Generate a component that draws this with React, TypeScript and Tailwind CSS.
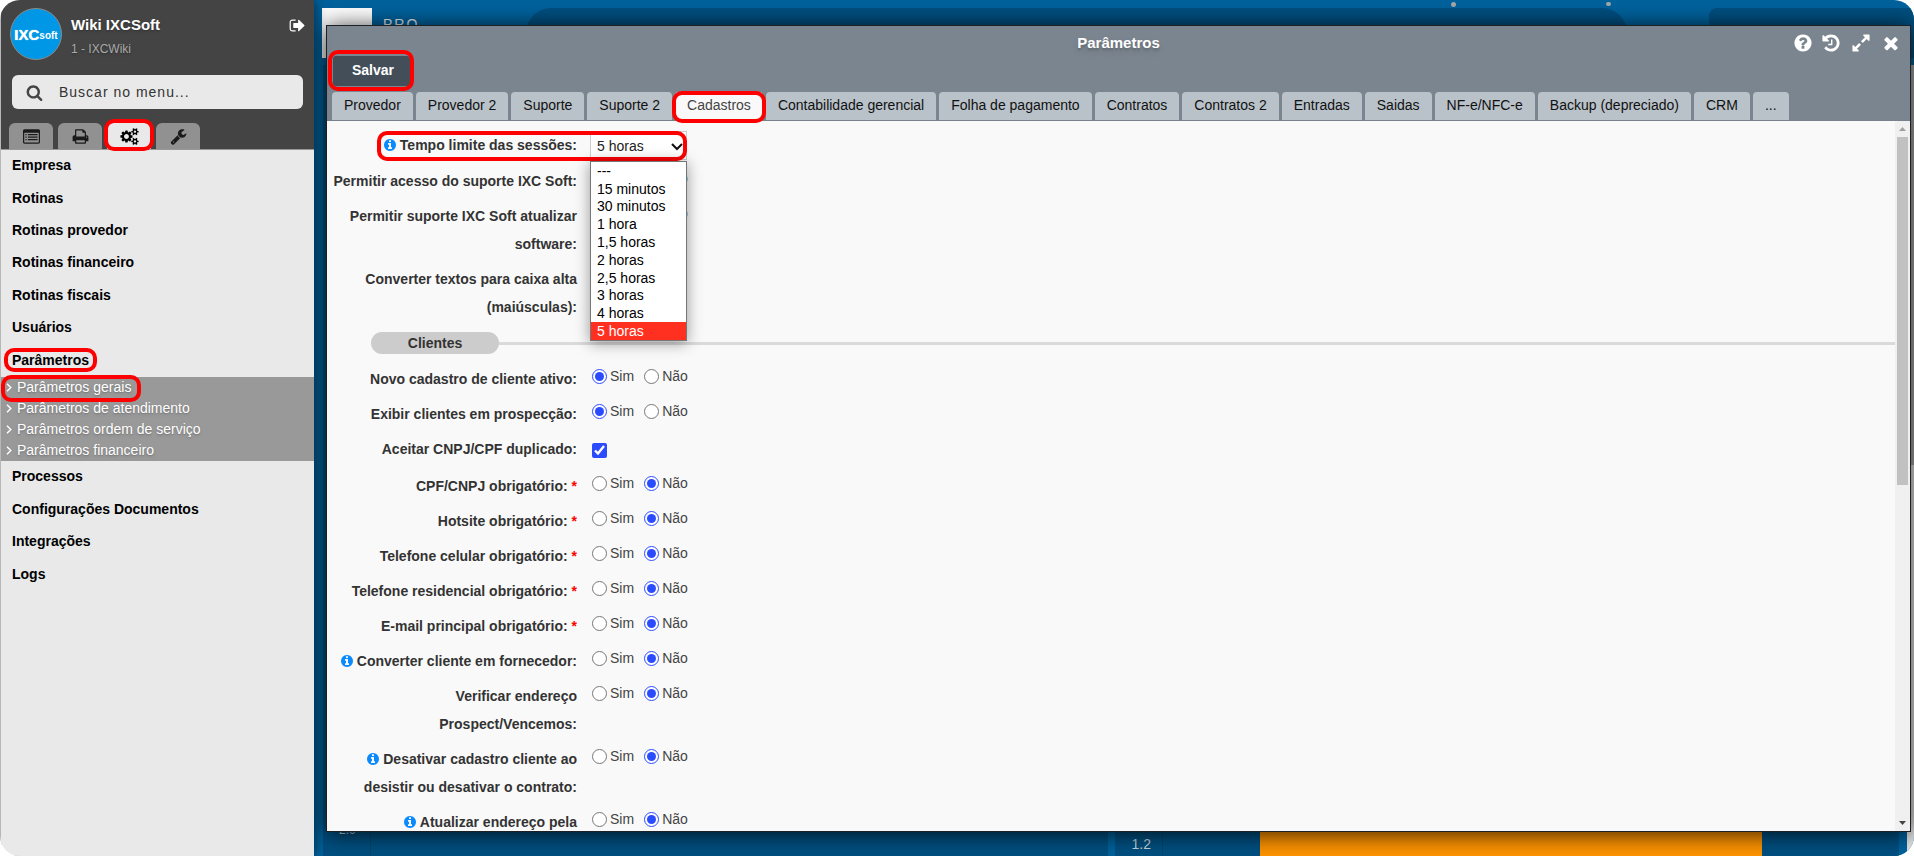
import { useState } from 'react'
import type { ReactNode } from 'react'
import { clsx } from 'clsx'

const icons = {
  search:
    'M1216 832q0-185-131.5-316.5t-316.5-131.5-316.5 131.5-131.5 316.5 131.5 316.5 316.5 131.5 316.5-131.5 131.5-316.5zm512 832q0 52-38 90t-90 38q-54 0-90-38l-343-342q-179 124-399 124-143 0-273.5-55.5t-225-150-150-225-55.5-273.5 55.5-273.5 150-225 225-150 273.5-55.5 273.5 55.5 225 150 150 225 55.5 273.5q0 220-124 399l343 343q37 37 37 90z',
  signOut:
    'M704 1440q0 4 1 20t.5 26.5-3 23.5-10 19.5-20.5 6.5h-320q-119 0-203.5-84.5t-84.5-203.5v-704q0-119 84.5-203.5t203.5-84.5h320q13 0 22.5 9.5t9.5 22.5q0 4 1 20t.5 26.5-3 23.5-10 19.5-20.5 6.5h-320q-66 0-113 47t-47 113v704q0 66 47 113t113 47h312l11.5 1 11.5 3 8 5.5 7 9 2 13.5zm928-544q0 26-19 45l-544 544q-19 19-45 19t-45-19-19-45v-288h-448q-26 0-45-19t-19-45v-384q0-26 19-45t45-19h448v-288q0-26 19-45t45-19 45 19l544 544q19 19 19 45z',
  list:
    'M160 128h1472q66 0 113 47t47 113v1216q0 66-47 113t-113 47h-1472q-66 0-113-47t-47-113v-1216q0-66 47-113t113-47zm0 384q-32 0-32 32v960q0 32 32 32h1472q32 0 32-32v-960q0-32-32-32zM256 640h128v128h-128zM512 640h1024v128h-1024zM256 896h128v128h-128zM512 896h1024v128h-1024zM256 1152h128v128h-128zM512 1152h1024v128h-1024z',
  print:
    'M448 1536h896v-256h-896v256zm0-640h896v-384h-160q-40 0-68-28t-28-68v-160h-640v640zm1152 64q0-26-19-45t-45-19-45 19-19 45 19 45 45 19 45-19 19-45zm128 0v416q0 13-9.5 22.5t-22.5 9.5h-224v160q0 40-28 68t-68 28h-960q-40 0-68-28t-28-68v-160h-224q-13 0-22.5-9.5t-9.500-22.5v-416q0-79 56.5-135.5t135.5-56.5h64v-544q0-40 28-68t68-28h672q40 0 88 20t76 48l152 152q28 28 48 76t20 88v256h64q79 0 135.5 56.5t56.5 135.5z',
  cogs:
    'M896 896q0-106-75-181t-181-75-181 75-75 181 75 181 181 75 181-75 75-181zm768 512q0-52-38-90t-90-38-90 38-38 90q0 53 37.5 90.5t90.5 37.5 90.5-37.5 37.5-90.5zm0-1024q0-52-38-90t-90-38-90 38-38 90q0 53 37.5 90.5t90.5 37.5 90.5-37.5 37.5-90.5zm-384 421v185q0 10-7 19.5t-16 10.5l-155 24q-11 35-32 76 34 48 90 115 7 11 7 20 0 12-7 19-23 30-82.5 89.5t-78.5 59.5q-11 0-21-7l-115-90q-37 19-77 31-11 108-23 155-7 24-30 24h-186q-11 0-20-7.5t-10-17.5l-23-153q-34-10-75-31l-118 89q-7 7-20 7-11 0-21-8-144-133-144-160 0-9 7-19 10-14 41-53t47-61q-23-44-35-82l-152-24q-10-1-17-9.5t-7-19.5v-185q0-10 7-19.5t16-10.5l155-24q11-35 32-76-34-48-90-115-7-11-7-20 0-12 7-20 22-30 82-89t79-59q11 0 21 7l115 90q34-18 77-32 11-108 23-154 7-24 30-24h186q11 0 20 7.5t10 17.5l23 153q34 10 75 31l118-89q8-7 20-7 11 0 21 8 144 133 144 160 0 8-7 19-12 16-42 54t-45 60q23 48 34 82l152 23q10 2 17 10.5t7 19.5zm640 533v140q0 16-149 31-12 27-30 52 51 113 51 138 0 4-4 7-122 71-124 71-8 0-46-47t-52-68q-20 2-30 2t-30-2q-14 21-52 68t-46 47q-2 0-124-71-4-3-4-7 0-25 51-138-18-25-30-52-149-15-149-31v-140q0-16 149-31 13-29 30-52-51-113-51-138 0-4 4-7 4-2 35-20t59-34 30-16q8 0 46 46.5t52 67.5q20-2 30-2t30 2q51-71 92-112l6-2q4 0 124 70 4 3 4 7 0 25-51 138 17 23 30 52 149 15 149 31zm0-1024v140q0 16-149 31-12 27-30 52 51 113 51 138 0 4-4 7-122 71-124 71-8 0-46-47t-52-68q-20 2-30 2t-30-2q-14 21-52 68t-46 47q-2 0-124-71-4-3-4-7 0-25 51-138-18-25-30-52-149-15-149-31v-140q0-16 149-31 13-29 30-52-51-113-51-138 0-4 4-7 4-2 35-20t59-34 30-16q8 0 46 46.5t52 67.5q20-2 30-2t30 2q51-71 92-112l6-2q4 0 124 70 4 3 4 7 0 25-51 138 17 23 30 52 149 15 149 31z',
  wrench:
    'M448 1472q0-26-19-45t-45-19-45 19-19 45 19 45 45 19 45-19 19-45zm644-420l-682 682q-37 37-90 37-52 0-91-37l-106-108q-38-36-38-90 0-53 38-91l681-681q39 98 114.5 173.5t173.5 114.5zm634-435q0 39-23 106-47 134-164.5 217.5t-258.5 83.5q-185 0-316.5-131.5t-131.5-316.5 131.5-316.5 316.5-131.5q58 0 121.5 16.5t107.5 46.5q16 11 16 28t-16 28l-293 169v224l193 107q5-3 79-48.5t135.5-81 70.5-35.5q15 0 23.5 10t8.5 25z',
  question:
    'M1024 1376v-192q0-14-9-23t-23-9h-192q-14 0-23 9t-9 23v192q0 14 9 23t23 9h192q14 0 23-9t9-23zm256-672q0-88-55.5-163t-138.5-116-170-41q-243 0-371 213-15 24 8 42l132 100q7 6 19 6 16 0 25-12 53-68 86-92 34-24 86-24 48 0 85.5 26t37.5 59q0 38-20 61t-68 45q-63 28-115.5 86.5t-52.5 125.5v36q0 14 9 23t23 9h192q14 0 23-9t9-23q0-19 21.5-49.5t54.5-49.5q32-18 49-28.5t46-35 44.5-48 28-60.5 12.5-81zm384 192q0 209-103 385.5t-279.5 279.5-385.5 103-385.5-103-279.5-279.5-103-385.5 103-385.5 279.5-279.5 385.5-103 385.5 103 279.5 279.5 103 385.5z',
  info:
    'M1152 1376v-160q0-14-9-23t-23-9h-96v-512q0-14-9-23t-23-9h-320q-14 0-23 9t-9 23v160q0 14 9 23t23 9h96v320h-96q-14 0-23 9t-9 23v160q0 14 9 23t23 9h448q14 0 23-9t9-23zm-128-896v-160q0-14-9-23t-23-9h-192q-14 0-23 9t-9 23v160q0 14 9 23t23 9h192q14 0 23-9t9-23zm640 416q0 209-103 385.5t-279.5 279.5-385.5 103-385.5-103-279.5-279.5-103-385.5 103-385.5 279.5-279.5 385.5-103 385.5 103 279.5 279.5 103 385.5z',
  history:
    'M1664 896q0 156-61 298t-164 245-245 164-298 61q-172 0-327-72.5t-264-204.5q-7-10-6.5-22.5t8.5-20.5l137-138q10-9 25-9 16 2 23 12 73 95 179 147t225 52q104 0 198.5-40.5t163.5-109.5 109.5-163.5 40.5-198.5-40.5-198.5-109.5-163.5-163.5-109.5-198.5-40.5q-98 0-188 35.5t-160 101.5l137 138q31 30 14 69-17 40-59 40h-448q-26 0-45-19t-19-45v-448q0-42 40-59 39-17 69 14l130 129q107-101 244.5-156.5t284.5-55.5q156 0 298 61t245 164 164 245 61 298zm-640-288v448q0 14-9 23t-23 9h-320q-14 0-23-9t-9-23v-64q0-14 9-23t23-9h224v-352q0-14 9-23t23-9h64q14 0 23 9t9 23z',
  expand:
    'M883 1056q0 13-10 23l-332 332 144 144q19 19 19 45t-19 45-45 19h-448q-26 0-45-19t-19-45v-448q0-26 19-45t45-19 45 19l144 144 332-332q10-10 23-10t23 10l114 114q10 10 10 23zm781-864v448q0 26-19 45t-45 19-45-19l-144-144-332 332q-10 10-23 10t-23-10l-114-114q-10-10-10-23t10-23l332-332-144-144q-19-19-19-45t19-45 45-19h448q26 0 45 19t19 45z',
  close:
    'M1490 1322q0 40-28 68l-136 136q-28 28-68 28t-68-28l-294-294-294 294q-28 28-68 28t-68-28l-136-136q-28-28-28-68t28-68l294-294-294-294q-28-28-28-68t28-68l136-136q28-28 68-28t68 28l294 294 294-294q28-28 68-28t68 28l136 136q28 28 28 68t-28 68l-294 294 294 294q28 28 28 68z',
}

type IconName = keyof typeof icons

function Icon({ name, className }: { name: IconName; className?: string }) {
  const wide = name === 'cogs'
  return (
    <svg viewBox={wide ? '0 0 1920 1792' : '0 0 1792 1792'} fill="currentColor" fillRule={name === 'list' ? 'evenodd' : 'nonzero'} className={clsx('shrink-0', className)} aria-hidden="true">
      <path d={icons[name]} />
    </svg>
  )
}

// Red highlight drawn over the element it sits in
function Mark({ className }: { className: string }) {
  return <span className={clsx('pointer-events-none absolute z-10 rounded-[10px] border-4 border-[#fe0000]', className)} />
}

const menuTop = ['Empresa', 'Rotinas', 'Rotinas provedor', 'Rotinas financeiro', 'Rotinas fiscais', 'Usuários', 'Parâmetros']
const menuBottom = ['Processos', 'Configurações Documentos', 'Integrações', 'Logs']
const submenu = ['Parâmetros gerais', 'Parâmetros de atendimento', 'Parâmetros ordem de serviço', 'Parâmetros financeiro']

const sideTabs: { icon: IconName; label: string }[] = [
  { icon: 'list', label: 'Cadastros' },
  { icon: 'print', label: 'Relatórios' },
  { icon: 'cogs', label: 'Configurações' },
  { icon: 'wrench', label: 'Ferramentas' },
]

const tabs = [
  'Provedor', 'Provedor 2', 'Suporte', 'Suporte 2', 'Cadastros', 'Contabilidade gerencial', 'Folha de pagamento',
  'Contratos', 'Contratos 2', 'Entradas', 'Saidas', 'NF-e/NFC-e', 'Backup (depreciado)', 'CRM', '...',
]

const sessionTimes = ['---', '15 minutos', '30 minutos', '1 hora', '1,5 horas', '2 horas', '2,5 horas', '3 horas', '4 horas', '5 horas']

const clientFields = [
  { id: 'ativo', label: 'Novo cadastro de cliente ativo:', value: 'sim' },
  { id: 'prospeccao', label: 'Exibir clientes em prospecção:', value: 'sim' },
  { id: 'duplicado', label: 'Aceitar CNPJ/CPF duplicado:', value: 'check' },
  { id: 'cpf', label: 'CPF/CNPJ obrigatório:', value: 'nao', required: true },
  { id: 'hotsite', label: 'Hotsite obrigatório:', value: 'nao', required: true },
  { id: 'celular', label: 'Telefone celular obrigatório:', value: 'nao', required: true },
  { id: 'residencial', label: 'Telefone residencial obrigatório:', value: 'nao', required: true },
  { id: 'email', label: 'E-mail principal obrigatório:', value: 'nao', required: true },
  { id: 'fornecedor', label: 'Converter cliente em fornecedor:', value: 'nao', info: true },
  { id: 'endereco', label: 'Verificar endereço Prospect/Vencemos:', value: 'nao' },
  { id: 'desativar', label: 'Desativar cadastro cliente ao desistir ou desativar o contrato:', value: 'nao', info: true },
  { id: 'atualizar', label: 'Atualizar endereço pela', value: 'nao', info: true },
]

function LabelText({ children, info, required }: { children: ReactNode; info?: boolean; required?: boolean }) {
  return (
    <>
      {info && <Icon name="info" className="mr-[3px] inline-block h-[14px] w-[14px] align-[-2px] text-[#0a8aff]" />}
      {children}
      {required && <span className="text-[#f00]"> *</span>}
    </>
  )
}

const rowClass = 'grid grid-cols-[248px_1fr] gap-x-[13px] pb-[7px] pl-[2px]'
const labelClass = 'text-right font-bold leading-7 text-[#333]'

function RadioRow({ id, label, value, info, required }: { id: string; label: string; value: string; info?: boolean; required?: boolean }) {
  return (
    <div role="radiogroup" aria-labelledby={`${id}-label`} className={rowClass}>
      <div id={`${id}-label`} className={labelClass}>
        <LabelText info={info} required={required}>{label}</LabelText>
      </div>
      <div className="flex h-[22px] items-center gap-[10px] pl-[2px] text-[#444]">
        <label className="flex items-center gap-[3px]">
          <input type="radio" name={id} defaultChecked={value === 'sim'} className="h-[15px] w-[15px] accent-[#2b4bff]" />
          Sim
        </label>
        <label className="flex items-center gap-[3px]">
          <input type="radio" name={id} defaultChecked={value === 'nao'} className="h-[15px] w-[15px] accent-[#2b4bff]" />
          Não
        </label>
      </div>
    </div>
  )
}

function CheckRow({ id, label, checked }: { id: string; label: string; checked?: boolean }) {
  return (
    <div className={rowClass}>
      <label htmlFor={id} className={labelClass}>{label}</label>
      <div className="flex h-[30px] items-center pl-[2px]">
        <input id={id} type="checkbox" defaultChecked={checked} className="h-[15px] w-[15px] accent-[#2b4bff]" />
      </div>
    </div>
  )
}

function Sidebar() {
  return (
    <aside className="z-20 flex w-[313px] shrink-0 flex-col bg-[#e9e9e9] shadow-[0_0_12px_rgba(0,0,0,0.6)]">
      <div className="border-b border-[#999] bg-[#444] px-2">
        <div className="flex h-[75px] pt-2 pl-px">
          <div className="flex h-[52px] w-[52px] items-center justify-center rounded-full border border-[#8a8a8a] bg-[#0098e6] font-bold leading-none text-white">
            <span className="text-[15px] text-shadow-[0_0_1px_#fff]">IXC</span>
            <span className="pt-1 text-[10px]">soft</span>
          </div>
          <div className="pl-[9px] pt-[7px] text-shadow-md">
            <div className="text-[15px] font-bold leading-5 text-white">Wiki IXCSoft</div>
            <div className="pt-1 text-[12px] leading-5 text-[#aaa]">1 - IXCWiki</div>
          </div>
          <button type="button" aria-label="Sair" className="ml-auto h-[34px] text-white">
            <Icon name="signOut" className="h-[17px] w-[17px]" />
          </button>
        </div>
        <label className="mx-[3px] flex h-[34px] items-center gap-4 rounded-[6px] bg-[#e9e9e9] pl-[14px] text-[#444]">
          <Icon name="search" className="h-[17px] w-[17px]" />
          <input type="text" aria-label="Buscar no menu" placeholder="Buscar no menu..." className="w-full bg-transparent pb-px text-[14px] tracking-[1px] outline-none placeholder:text-[#333]" />
        </label>
        <div className="mt-[14px] flex gap-[5px]">
          {sideTabs.map((tab) => {
            const active = tab.icon === 'cogs'
            return (
              <button
                key={tab.icon}
                type="button"
                aria-label={tab.label}
                className={clsx('relative flex h-[26px] w-[44px] items-center justify-center rounded-t-[6px]', active ? 'bg-[#e9e9e9] text-black' : 'bg-[#919191] text-[#1a1a1a]')}
              >
                <Icon name={tab.icon} className={clsx('h-[17px]', active ? 'w-[19px]' : 'w-[17px]')} />
                {active && <Mark className="-inset-x-[3px] -top-1 -bottom-[2px]" />}
              </button>
            )
          })}
        </div>
      </div>

      <nav className="text-[14px] text-black">
        <ul className="grid h-[227px] auto-rows-fr font-bold">
          {menuTop.map((item) => (
            <li key={item} className="flex items-center pb-[2px] pl-[11px]">
              <a href="#" className="relative">
                {item}
                {item === 'Parâmetros' && <Mark className="-inset-x-2 -inset-y-[2px]" />}
              </a>
            </li>
          ))}
        </ul>
        <ul className="bg-[#999] text-white text-shadow-md">
          {submenu.map((item, i) => (
            <li key={item} className="flex h-[21px] items-center">
              <a href="#" className="relative flex h-[21px] items-center gap-[5px] pl-[5px] pb-px">
                <svg viewBox="0 0 6 9" className="h-[9px] w-[6px]" fill="none" stroke="currentColor" strokeWidth="1.4" aria-hidden="true">
                  <path d="M1 .7 4.8 4.5 1 8.3" />
                </svg>
                {item}
                {i === 0 && <Mark className="left-0 -right-[10px] -top-[2px] -bottom-1" />}
              </a>
            </li>
          ))}
        </ul>
        <ul className="grid h-[130px] auto-rows-fr font-bold">
          {menuBottom.map((item) => (
            <li key={item} className="flex items-center pb-[2px] pl-[11px]">
              <a href="#">{item}</a>
            </li>
          ))}
        </ul>
      </nav>
    </aside>
  )
}

// Dashboard that shows behind the window
function Dashboard() {
  return (
    <div className="flex h-full flex-col bg-[#00629d] text-white">
      <div className="relative flex h-[65px] items-start pl-2 pt-2">
        <div className="h-[50px] w-[50px] bg-white" />
        <div className="w-[154px] pl-[11px] text-[14px] leading-8 tracking-[2px] text-[#e6ecf0]">PRO —</div>
        <div className="h-[50px] flex-1 rounded-full bg-[#004f80]" />
        <div className="ml-[82px] h-[50px] w-[205px] rounded-l-lg bg-[#004f80]" />
        <span className="absolute right-[458px] top-[2px] h-[5px] w-[5px] rounded-full bg-[#a5a5a5]" />
        <span className="absolute right-[303px] top-[2px] h-[4px] w-[5px] rounded-full bg-[#a5a5a5]" />
      </div>
      <div className="flex flex-1">
        <div className="flex flex-1 gap-[7px] pl-[9px] pr-2">
          <div className="flex flex-1 bg-[#005082]">
            <div className="flex w-[48px] items-end border-r border-[#00476f] pb-[18px] pl-4 text-[12px] leading-4 text-[#c8d4dc]">2.0</div>
          </div>
          <div className="flex flex-1 bg-[#005082]">
            <div className="flex w-[48px] items-end border-r border-[#00476f] pb-1 pl-[17px] text-[14px] leading-4 text-[#c8d4dc]">1.2</div>
            <div className="ml-[97px] mr-[137px] flex-1 bg-[#ff9400]" />
          </div>
        </div>
        <div className="w-[7px] bg-[#e4e4e4]">
          <div className="h-[400px] bg-[#a8a8a8]" />
        </div>
      </div>
    </div>
  )
}

export default function App() {
  const [time, setTime] = useState('5 horas')

  return (
    <div className="flex h-screen overflow-hidden rounded-[20px] bg-white pl-px font-['Liberation_Sans',Arial,sans-serif] text-[14px] leading-5">
      <Sidebar />
      <main className="relative min-w-0 flex-1">
        <Dashboard />

        <section className="absolute top-[25px] right-[3px] bottom-6 left-3 flex flex-col border border-[#1c2126] bg-[#f9f9f9] shadow-[0_2px_22px_rgba(0,0,0,0.8)]">
          <header className="border-b border-[#77818c] bg-[#7b858f]">
            <div className="grid h-[30px] grid-cols-[1fr_auto_1fr] items-center px-[9px] pt-1">
              <h1 className="col-start-2 text-[15px] font-bold text-white text-shadow-lg">Parâmetros</h1>
              <div className="flex justify-end gap-2 text-white">
                <button type="button" aria-label="Ajuda"><Icon name="question" className="h-5 w-5" /></button>
                <button type="button" aria-label="Histórico"><Icon name="history" className="h-5 w-5" /></button>
                <button type="button" aria-label="Maximizar" className="pl-[2px]"><Icon name="expand" className="h-5 w-5" /></button>
                <button type="button" aria-label="Fechar" className="pl-[2px]"><Icon name="close" className="h-5 w-5" /></button>
              </div>
            </div>
            <div className="flex pl-[6px]">
              <button type="button" className="relative h-[30px] w-[77px] rounded-[3px] bg-[#434e59] pb-[2px] pl-[3px] font-bold text-white">
                Salvar
                <Mark className="-left-[5px] -right-1 -top-[6px] -bottom-[5px]" />
              </button>
            </div>
            <div role="tablist" className="mt-[6px] flex gap-[3px] pl-[5px]">
              {tabs.map((tab) => {
                const active = tab === 'Cadastros'
                return (
                  <button
                    key={tab}
                    type="button"
                    role="tab"
                    aria-selected={active}
                    className={clsx('relative h-7 rounded-t-[4px] px-3 pb-[2px]', active ? 'bg-[#f9f9f9] text-[#444]' : 'bg-[#b9c2c9] text-[#111]')}
                  >
                    {tab}
                    {active && <Mark className="-inset-x-[3px] -top-px -bottom-[3px]" />}
                  </button>
                )
              })}
            </div>
          </header>

          <div className="flex min-h-0 flex-1">
            <form className="min-w-0 flex-1 overflow-hidden pt-[10px]">
              <div className={rowClass}>
                <label htmlFor="tempo" className={labelClass}>
                  <LabelText info>Tempo limite das sessões:</LabelText>
                </label>
                <div className="relative h-[29px] w-[97px]">
                  <select
                    id="tempo"
                    value={time}
                    onChange={(e) => setTime(e.target.value)}
                    className="h-[29px] w-full appearance-none border border-[#ccc] bg-white pl-[6px] text-[14px] text-[#222]"
                  >
                    {sessionTimes.map((t) => (
                      <option key={t}>{t}</option>
                    ))}
                  </select>
                  <svg viewBox="0 0 12 8" className="pointer-events-none absolute right-1 top-3 h-2 w-3" fill="none" stroke="#111" strokeWidth="2" aria-hidden="true">
                    <path d="M1 1l5 5 5-5" />
                  </svg>
                  <Mark className="-left-[213px] right-0 top-0 -bottom-px" />
                  {/* Open option list */}
                  <ul role="listbox" className="absolute left-0 top-[30px] z-20 grid h-[180px] w-[97px] auto-rows-fr border border-[#767676] bg-white text-black shadow-[0_2px_14px_rgba(0,0,0,0.4)]">
                    {sessionTimes.map((t) => (
                      <li
                        key={t}
                        role="option"
                        aria-selected={t === time}
                        onClick={() => setTime(t)}
                        className={clsx('flex items-center pl-[6px] leading-4', t === time && 'bg-[#ff3020] text-white')}
                      >
                        {t}
                      </li>
                    ))}
                  </ul>
                </div>
              </div>
              <RadioRow id="acesso" label="Permitir acesso do suporte IXC Soft:" value="nao" />
              <RadioRow id="software" label="Permitir suporte IXC Soft atualizar software:" value="nao" />
              <CheckRow id="caixa-alta" label="Converter textos para caixa alta (maiúsculas):" />

              <fieldset>
                <legend className="sr-only">Clientes</legend>
                <div className="flex items-center pt-1 pb-[11px] pl-11">
                  <div className="w-[128px] rounded-full bg-[#ccc] text-center font-bold leading-[22px] text-[#333]">Clientes</div>
                  <div className="h-[3px] flex-1 bg-[#dadada]" />
                </div>
                {clientFields.map((f) =>
                  f.value === 'check' ? <CheckRow key={f.id} id={f.id} label={f.label} checked /> : <RadioRow key={f.id} {...f} />
                )}
              </fieldset>
            </form>
            <div className="flex w-[15px] flex-col items-center bg-[#f0f0f0]">
              <svg viewBox="0 0 7 4" className="my-[6px] h-1 w-[7px]" fill="#a0a0a0" aria-hidden="true"><path d="M3.5 0 7 4H0z" /></svg>
              <div className="mb-auto h-[348px] w-[11px] bg-[#c1c1c1]" />
              <svg viewBox="0 0 7 4" className="my-[6px] h-1 w-[7px]" fill="#444" aria-hidden="true"><path d="M3.5 4 7 0H0z" /></svg>
            </div>
          </div>
        </section>
      </main>
    </div>
  )
}
